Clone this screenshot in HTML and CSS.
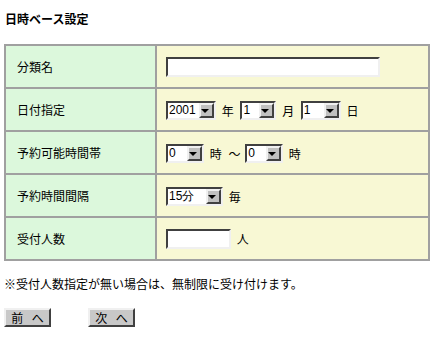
FILE: index.html
```html
<!DOCTYPE html>
<html lang="ja">
<head>
  <meta charset="UTF-8">
  <title>日時ベース設定</title>
  <link rel="stylesheet" href="styles.css">
</head>
<body>
  <h1 class="title">日時ベース設定</h1>

  <table class="form">
    <tr>
      <th>分類名</th>
      <td><input type="text" class="text wide"></td>
    </tr>
    <tr>
      <th>日付指定</th>
      <td>
        <span class="sel w-year"><select><option>2001</option></select></span>
        <span class="unit">年</span>
        <span class="sel w-num"><select><option>1</option></select></span>
        <span class="unit">月</span>
        <span class="sel w-num2"><select><option>1</option></select></span>
        <span class="unit">日</span>
      </td>
    </tr>
    <tr>
      <th>予約可能時間帯</th>
      <td>
        <span class="sel w-hour"><select><option>0</option></select></span>
        <span class="unit">時</span>
        <span class="unit tilde">～</span>
        <span class="sel w-hour"><select><option>0</option></select></span>
        <span class="unit">時</span>
      </td>
    </tr>
    <tr>
      <th>予約時間間隔</th>
      <td>
        <span class="sel w-min"><select><option>15分</option></select></span>
        <span class="unit">毎</span>
      </td>
    </tr>
    <tr>
      <th>受付人数</th>
      <td>
        <input type="text" class="text short">
        <span class="unit">人</span>
      </td>
    </tr>
  </table>

  <p class="note">※受付人数指定が無い場合は、無制限に受け付けます。</p>

  <div class="nav">
    <button class="btn">前 へ</button>
    <button class="btn">次 へ</button>
  </div>
</body>
</html>
```

FILE: styles.css
```css
body {
  margin: 0;
  padding: 4px;
  background: #fff;
  color: #000;
  font-family: "Noto Sans CJK JP", "Liberation Sans", sans-serif;
  font-size: 12px;
}

.title {
  margin: 0;
  padding: 8px 0 0 1px;
  font-size: 12px;
  line-height: 14px;
  font-weight: bold;
}

.form {
  margin-top: 18px;
  width: 426px;
  border-collapse: collapse;
  border: 2px solid #a0a0a0;
}

.form th,
.form td {
  height: 41px;
  padding: 0;
  border: 2px solid #a0a0a0;
  text-align: left;
  font-weight: normal;
  white-space: nowrap;
}

.form th {
  width: 138px;
  padding-left: 11px;
  background: #dcf8dc;
}

.form td {
  padding-left: 9px;
  background: #f8f8d4;
}

.form td > * {
  vertical-align: middle;
}

.text {
  box-sizing: border-box;
  height: 20px;
  margin: 0;
  padding: 0 2px;
  background: #fff;
  border: 2px solid;
  border-color: #404040 #f0f0f0 #f0f0f0 #404040;
  font: 12px "Liberation Sans", sans-serif;
}

.wide { width: 214px; }
.short { width: 65px; }

.sel {
  position: relative;
  display: inline-block;
  box-sizing: border-box;
  height: 19px;
  border: 2px solid;
  border-color: #404040 #f0f0f0 #f0f0f0 #404040;
  background: #fff;
}

.sel select {
  appearance: none;
  -webkit-appearance: none;
  display: block;
  width: 100%;
  height: 15px;
  margin: 0;
  padding: 0 0 0 1px;
  border: 0;
  outline: 0;
  background: transparent;
  font: 12px/15px "Liberation Sans", sans-serif;
  color: #000;
}

.sel::after {
  content: "";
  position: absolute;
  top: 0;
  right: 0;
  width: 11px;
  height: 11px;
  background: #c0c0c0;
  border: 2px solid;
  border-color: #f0f0f0 #404040 #404040 #f0f0f0;
  box-sizing: content-box;
  pointer-events: none;
}

.sel::before {
  content: "";
  position: absolute;
  top: 6px;
  right: 5px;
  z-index: 1;
  border-style: solid;
  border-width: 4px 4px 0 4px;
  border-color: #000 transparent transparent transparent;
  pointer-events: none;
}

.w-year { width: 50px; }
.w-num { width: 36px; }
.w-num2 { width: 40px; }
.w-hour { width: 38px; }
.w-min { width: 57px; }

.unit {
  display: inline-block;
  margin: 0 4px 0 3px;
  font-size: 12px;
}

.tilde {
  margin: 0 2px 0 0;
}

.note {
  margin: 15px 0 0;
  line-height: 16px;
}

.nav {
  display: flex;
  gap: 37px;
  margin-top: 16px;
}

.btn {
  box-sizing: border-box;
  width: 47px;
  height: 19px;
  margin: 0;
  padding: 0;
  background: #c8c8c8;
  border: 2px solid;
  border-color: #f0f0f0 #404040 #404040 #f0f0f0;
  font-family: "Noto Sans CJK JP", sans-serif;
  font-size: 12px;
  line-height: 15px;
  color: #000;
  word-spacing: 6px;
}
```
